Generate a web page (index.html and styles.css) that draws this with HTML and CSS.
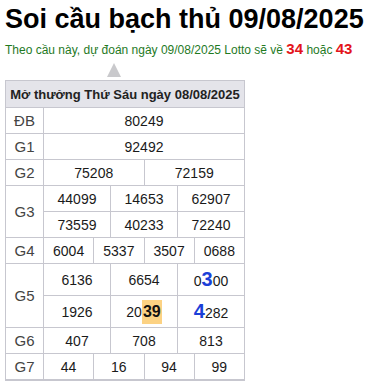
FILE: index.html
```html
<!DOCTYPE html>
<html lang="vi">
<head>
<meta charset="utf-8">
<link rel="stylesheet" href="styles.css">
</head>
<body>
<h1 class="title">Soi cầu bạch thủ 09/08/2025</h1>
<p class="sub">Theo cầu này, dự đoán ngày 09/08/2025 Lotto sẽ về <b class="red">34</b> hoặc <b class="red">43</b></p>
<div class="arrow-row"><span class="arrow"></span></div>
<table class="kq">
  <colgroup>
    <col class="c-label">
    <col><col><col><col><col><col><col><col><col><col><col><col>
  </colgroup>
  <tr class="head"><th colspan="13">Mở thưởng Thứ Sáu ngày 08/08/2025</th></tr>
  <tr><td class="lbl">ĐB</td><td colspan="12">80249</td></tr>
  <tr><td class="lbl">G1</td><td colspan="12">92492</td></tr>
  <tr><td class="lbl">G2</td><td colspan="6">75208</td><td colspan="6">72159</td></tr>
  <tr><td class="lbl" rowspan="2">G3</td><td colspan="4">44099</td><td colspan="4">14653</td><td colspan="4">62907</td></tr>
  <tr><td colspan="4">73559</td><td colspan="4">40233</td><td colspan="4">72240</td></tr>
  <tr><td class="lbl">G4</td><td colspan="3">6004</td><td colspan="3">5337</td><td colspan="3">3507</td><td colspan="3">0688</td></tr>
  <tr class="tall"><td class="lbl" rowspan="2">G5</td><td colspan="4">6136</td><td colspan="4">6654</td><td colspan="4">0<b class="blue">3</b>00</td></tr>
  <tr class="tall"><td colspan="4">1926</td><td colspan="4">20<b class="hl">39</b></td><td colspan="4"><b class="blue">4</b>282</td></tr>
  <tr><td class="lbl">G6</td><td colspan="4">407</td><td colspan="4">708</td><td colspan="4">813</td></tr>
  <tr class="last"><td class="lbl">G7</td><td colspan="3">44</td><td colspan="3">16</td><td colspan="3">94</td><td colspan="3">99</td></tr>
</table>
</body>
</html>
```
FILE: styles.css
```css
body {
  margin: 0;
  padding: 0 5px;
  font-family: "Liberation Sans", Arial, sans-serif;
  background: #fff;
  color: #111;
}
.title {
  margin: 4px 0 0;
  font-size: 27px;
  line-height: 30px;
  font-weight: bold;
  color: #000;
}
.sub {
  margin: 6px 0 0;
  font-size: 12px;
  line-height: 18px;
  color: #1f7a1f;
}
.red {
  color: #e3141b;
  font-size: 15px;
}
.arrow-row {
  height: 21px;
  padding-left: 102px;
  padding-top: 4px;
  box-sizing: border-box;
}
.arrow {
  display: block;
  width: 0;
  height: 0;
  border-left: 7px solid transparent;
  border-right: 7px solid transparent;
  border-bottom: 14px solid #c9c9cc;
}
.kq {
  border-collapse: collapse;
  width: 240px;
  table-layout: fixed;
  font-size: 14px;
  color: #1a1a1a;
}
.c-label { width: 38px; }
.kq th, .kq td {
  border: 1px solid #c7c7cf;
  text-align: center;
  padding: 0;
  height: 25px;
}
.kq th {
  background: #e4e4ea;
  font-size: 13px;
  font-weight: bold;
  color: #222;
  white-space: nowrap;
  height: 26px;
}
.kq .lbl {
  color: #444;
  font-size: 15px;
}
.kq .tall td { height: 31px; }
.kq .last td { border-bottom: 2px solid #c7c7cf; }
.blue {
  color: #1b3fd8;
  font-size: 20px;
}
.hl {
  background: #fcd283;
  font-size: 16px;
  padding: 3px 1px 4px;
  color: #111;
}
```
